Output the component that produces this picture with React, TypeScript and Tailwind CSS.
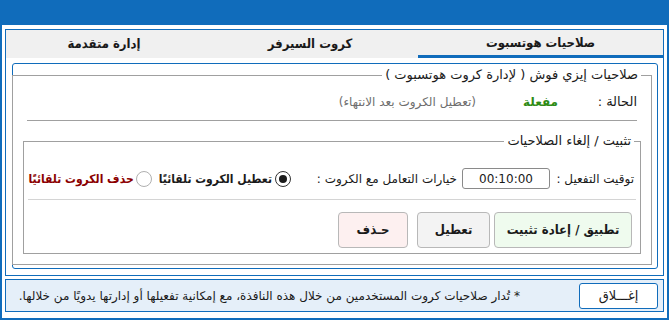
import React from 'react';

const Radio: React.FC<{ checked?: boolean }> = ({ checked }) => (
    <span
        className={
            checked
                ? 'w-[16px] h-[16px] rounded-full border border-[#333] bg-white flex items-center justify-center shrink-0'
                : 'w-[16px] h-[16px] rounded-full border border-[#b0b0b0] bg-white flex items-center justify-center shrink-0'
        }
    >
        {checked && <span className="w-[8px] h-[8px] rounded-full bg-[#1a1a1a]" />}
    </span>
);

export default function App() {
    return (
        <div
            dir="rtl"
            className="w-[669px] h-[320px] bg-white border-x-2 border-b-2 border-[#106cbb] flex flex-col overflow-hidden font-['DejaVu_Sans',sans-serif] text-[12px] text-[#1a1a1a]"
        >
            {/* title bar */}
            <div className="h-[25px] shrink-0 bg-[#106cbb]" />

            <div className="flex-1 flex flex-col px-[3px] pt-[4px] pb-[6px]">
                {/* tab control */}
                <div className="h-[247px] border border-[#106cbb] flex flex-col">
                    <div className="h-[28px] shrink-0 bg-[#f0f0f0] flex font-bold text-[13px] font-['DejaVu_Sans_Condensed','DejaVu_Sans',sans-serif]">
                        <div className="w-[245px] flex items-center justify-center border-b-[3px] border-[#106cbb]">
                            صلاحيات هوتسبوت
                        </div>
                        <div className="w-[216px] flex items-center justify-center">كروت السيرفر</div>
                        <div className="flex-1 flex items-center justify-center">إدارة متقدمة</div>
                    </div>

                    {/* tab page */}
                    <div className="flex-1 min-h-0 mt-[5px] mb-[6px] ml-[6px] mr-[5px] border border-[#106cbb] rounded-[3px] px-[5px] pt-[3px] pb-[3px] flex flex-col">
                        <fieldset className="flex-1 min-h-0 border border-[#a0a0a0] px-[14px] pb-[10px]">
                            <legend className="px-[3px] -mr-[4px] leading-[16px] text-[13px]">
                                صلاحيات إيزي فوش ( لإدارة كروت هوتسبوت )
                            </legend>

                            <div className="mt-[10px] h-[18px] flex items-center whitespace-nowrap">
                                <span className="w-[79px] text-[13px]">الحالة :</span>
                                <span className="w-[82px] font-bold text-[#2e8b14]">مفعلة</span>
                                <span className="text-[#6e6e6e]">(تعطيل الكروت بعد الانتهاء)</span>
                            </div>

                            <div className="mt-[9px] h-px bg-[#a0a0a0]" />

                            <fieldset className="mt-[12px] -mx-[4px] border border-[#a0a0a0] px-[4px] pb-[5px]">
                                <legend className="px-[3px] mr-[2px] leading-[16px] text-[13px]">
                                    تثبيت / إلغاء الصلاحيات
                                </legend>

                                <div className="mt-[19px] h-[21px] flex items-center pr-[2px] whitespace-nowrap">
                                    <span className="w-[78px]">توقيت التفعيل :</span>
                                    <div className="mr-[6px] w-[88px] h-[21px] border border-[#8a8a8a] rounded-[3px] flex items-center justify-center">
                                        00:10:00
                                    </div>
                                    <span className="mr-[5px] w-[155px]">خيارات التعامل مع الكروت :</span>
                                    <span className="mr-[11px]">
                                        <Radio checked />
                                    </span>
                                    <span className="mr-[3px] font-bold font-['DejaVu_Sans_Condensed','DejaVu_Sans',sans-serif]">
                                        تعطيل الكروت تلقائيًا
                                    </span>
                                    <span className="mr-[7px]">
                                        <Radio />
                                    </span>
                                    <span className="mr-[2px] font-bold text-[#8b0000] font-['DejaVu_Sans_Condensed','DejaVu_Sans',sans-serif]">
                                        حذف الكروت تلقائيًا
                                    </span>
                                </div>

                                <div className="mt-[10px] h-px bg-[#d4d4d4]" />

                                <div className="mt-[12px] flex pr-[4px] whitespace-nowrap font-bold text-[13px] font-['DejaVu_Sans_Condensed','DejaVu_Sans',sans-serif]">
                                    <button className="w-[138px] h-[36px] border border-[#b8b8b8] rounded-[4px] bg-[#effbee]">
                                        تطبيق / إعادة تثبيت
                                    </button>
                                    <button className="mr-[4px] w-[73px] h-[36px] border border-[#b8b8b8] rounded-[4px] bg-[#f3f3f3]">
                                        تعطيل
                                    </button>
                                    <button className="mr-[9px] w-[70px] h-[36px] border border-[#b8b8b8] rounded-[4px] bg-[#fdf0f0]">
                                        حـذف
                                    </button>
                                </div>
                            </fieldset>
                        </fieldset>
                    </div>
                </div>

                {/* footer */}
                <div className="mt-[3px] h-[33px] border border-[#106cbb] bg-[#e5eff9] flex items-center pr-[5px] whitespace-nowrap">
                    <button className="w-[79px] h-[26px] border border-[#106cbb] rounded-[3px] bg-white text-[13px]">
                        إغـــلاق
                    </button>
                    <span className="mr-[59px]">
                        * تُدار صلاحيات كروت المستخدمين من خلال هذه النافذة، مع إمكانية تفعيلها أو إدارتها يدويًا من خلالها.
                    </span>
                </div>
            </div>
        </div>
    );
}
